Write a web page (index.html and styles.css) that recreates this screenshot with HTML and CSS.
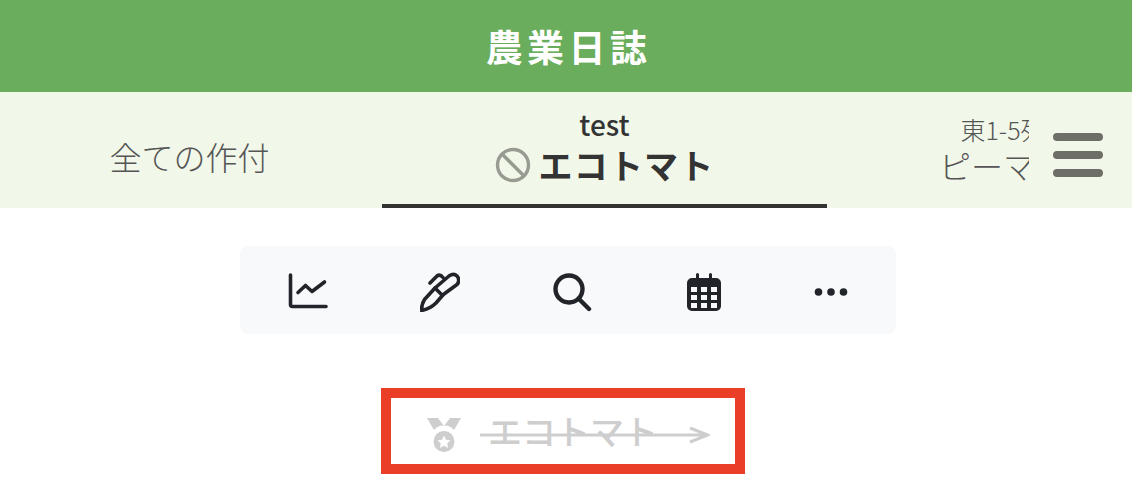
FILE: index.html
```html
<!DOCTYPE html>
<html lang="ja">
<head>
<meta charset="utf-8">
<title>農業日誌</title>
<link rel="stylesheet" href="styles.css">
</head>
<body>
<header class="app-header">農業日誌</header>
<nav class="tabs-bar">
  <div class="tabs">
    <div class="tab tab-all">全ての作付</div>
    <div class="tab tab-active">
      <div class="tab-sub tab-sub-active">test</div>
      <div class="tab-main-active">
        <svg class="ban" viewBox="0 0 36 36" aria-hidden="true"><circle cx="18" cy="18" r="15.5"/><path d="M7 7l22 22"/></svg>
        <span>エコトマト</span>
      </div>
    </div>
    <div class="tab tab-third">
      <div class="tab-sub">東1-5列</div>
      <div class="tab-main">ピーマン</div>
    </div>
  </div>
  <div class="burger"><i></i><i></i><i></i></div>
</nav>
<main class="content">
  <div class="toolbar">
    <svg class="tool" viewBox="0 0 40 40" aria-hidden="true"><path d="M2.500 3v29.500a2 2 0 0 0 2 2H38"/><path d="M10 20.500l7.500-7 6.500 6 12.500-9.500"/></svg>
    <svg class="tool" viewBox="0 0 40 40" aria-hidden="true"><path d="M1.500 38.500c0-4 1-8 3-11L15 16l7.500 7.500L16 31c-4 4-9 6.500-14.500 7.500z"/><path d="M15 16L29 4c3-2 6-2 8 0s2.500 6 0 8.500L22 23.500"/><path d="M10 11l7-7c2-1.500 4-1 6 1.500"/></svg>
    <svg class="tool tool-search" viewBox="0 0 40 40" aria-hidden="true"><circle cx="17" cy="17" r="13.500"/><path d="M27 27l10 10"/></svg>
    <svg class="tool tool-cal" viewBox="0 0 40 40" aria-hidden="true"><path fill-rule="evenodd" d="M12 2.500a1.500 1.500 0 0 1 3 0V6h10V2.500a1.500 1.500 0 0 1 3 0V6h4a5 5 0 0 1 5 5v23a5 5 0 0 1-5 5H8a5 5 0 0 1-5-5V11a5 5 0 0 1 5-5h4zM7 15v5h6v-5zm10 0v5h6v-5zm10 0v5h6v-5zM7 23v5h6v-5zm10 0v5h6v-5zm10 0v5h6v-5zM7 31v5h6v-5zm10 0v5h6v-5zm10 0v5h6v-5z"/></svg>
    <svg class="tool tool-dots" viewBox="0 0 40 40" aria-hidden="true"><circle cx="7.500" cy="20" r="3.800"/><circle cx="20" cy="20" r="3.800"/><circle cx="32.500" cy="20" r="3.800"/></svg>
  </div>
  <div class="crop-box">
    <svg class="medal" viewBox="0 0 34 34" aria-hidden="true"><path d="M0 0h11l6 8 6-8h11l-7 12a13 13 0 0 0-20 0z"/><path fill-rule="evenodd" d="M17 13a10.500 10.500 0 1 1 0 21 10.500 10.500 0 0 1 0-21zm0 4.500l-2 4.300-4.600.5 3.400 3.100-.9 4.600 4.100-2.300 4.100 2.300-.9-4.600 3.400-3.100-4.600-.5z"/></svg>
    <span class="crop-name">エコトマト</span>
    <svg class="arrow" viewBox="0 0 230 20" aria-hidden="true"><path d="M0 10h228M210 3l18 7-18 7"/></svg>
  </div>
</main>
</body>
</html>
```

FILE: styles.css
```css
* { box-sizing: border-box; }
html, body { margin: 0; padding: 0; }
body {
  width: 1132px;
  height: 492px;
  overflow: hidden;
  background: #fff;
  font-family: "Noto Sans CJK JP", "Noto Sans", sans-serif;
}
.app-header {
  height: 92px;
  background: #69ad5d;
  color: #fff;
  font-size: 37px;
  font-weight: 700;
  letter-spacing: 4.400px;
  line-height: 92px;
  text-align: center;
  padding-left: 5px;
}
.tabs-bar {
  height: 116px;
  background: #f1f8e9;
  display: flex;
  align-items: stretch;
}
.tabs {
  width: 1029px;
  overflow: hidden;
  display: flex;
  flex: none;
}
.tab {
  flex: none;
  display: flex;
  flex-direction: column;
  justify-content: center;
  align-items: center;
  color: #555;
  font-weight: 300;
}
.tab-all {
  width: 382px;
  font-size: 32px;
  line-height: 40px;
  padding: 11px 3px 0 0;
}
.tab-active {
  width: 445px;
  color: #333;
  border-bottom: 4px solid #333;
}
.tab-sub {
  font-size: 25px;
  line-height: 30px;
}
.tab-sub-active {
  font-size: 28px;
  font-weight: 500;
  line-height: 34px;
}
.tab-main-active {
  display: flex;
  align-items: center;
  gap: 8px;
  font-size: 34px;
  font-weight: 700;
  letter-spacing: 1.200px;
  line-height: 48px;
}
.ban {
  width: 36px;
  height: 36px;
  fill: none;
  stroke: #979b92;
  stroke-width: 3.400;
}
.tab-third {
  width: 352px;
}
.tab-main {
  font-size: 32px;
  line-height: 42px;
}
.burger {
  margin-left: 24px;
  width: 50px;
  padding-top: 41px;
  display: flex;
  flex-direction: column;
  gap: 10px;
}
.burger i {
  display: block;
  height: 8px;
  border-radius: 4px;
  background: #6e6e68;
}
.content {
  display: flex;
  flex-direction: column;
  align-items: center;
}
.toolbar {
  margin: 38px 0 0 4px;
  width: 656px;
  height: 88px;
  background: #f8f9fa;
  border-radius: 8px;
  display: flex;
  gap: 92px;
  align-items: center;
  padding: 4px 0 0 48px;
}
.tool {
  width: 40px;
  height: 40px;
  fill: none;
  stroke: #212529;
  stroke-width: 3.600;
  stroke-linecap: round;
  stroke-linejoin: round;
}
.tool-search {
  stroke-width: 4.400;
}
.tool-cal, .tool-dots {
  fill: #212529;
  stroke: none;
}
.tool-dots {
  margin-left: -5px;
}
.crop-box {
  margin: 54px 6px 0 0;
  width: 364px;
  height: 86px;
  border: 10px solid #ea3f26;
  display: flex;
  align-items: center;
  padding-left: 36px;
  position: relative;
}
.medal {
  width: 34px;
  height: 34px;
  margin-top: 8px;
  fill: #cecece;
  flex: none;
}
.crop-name {
  margin-left: 27px;
  color: #cecece;
  font-size: 34px;
  font-weight: 500;
  line-height: 40px;
}
.arrow {
  position: absolute;
  left: 89px;
  top: 27px;
  width: 230px;
  height: 20px;
  fill: none;
  stroke: #cecece;
  stroke-width: 3;
}
```
